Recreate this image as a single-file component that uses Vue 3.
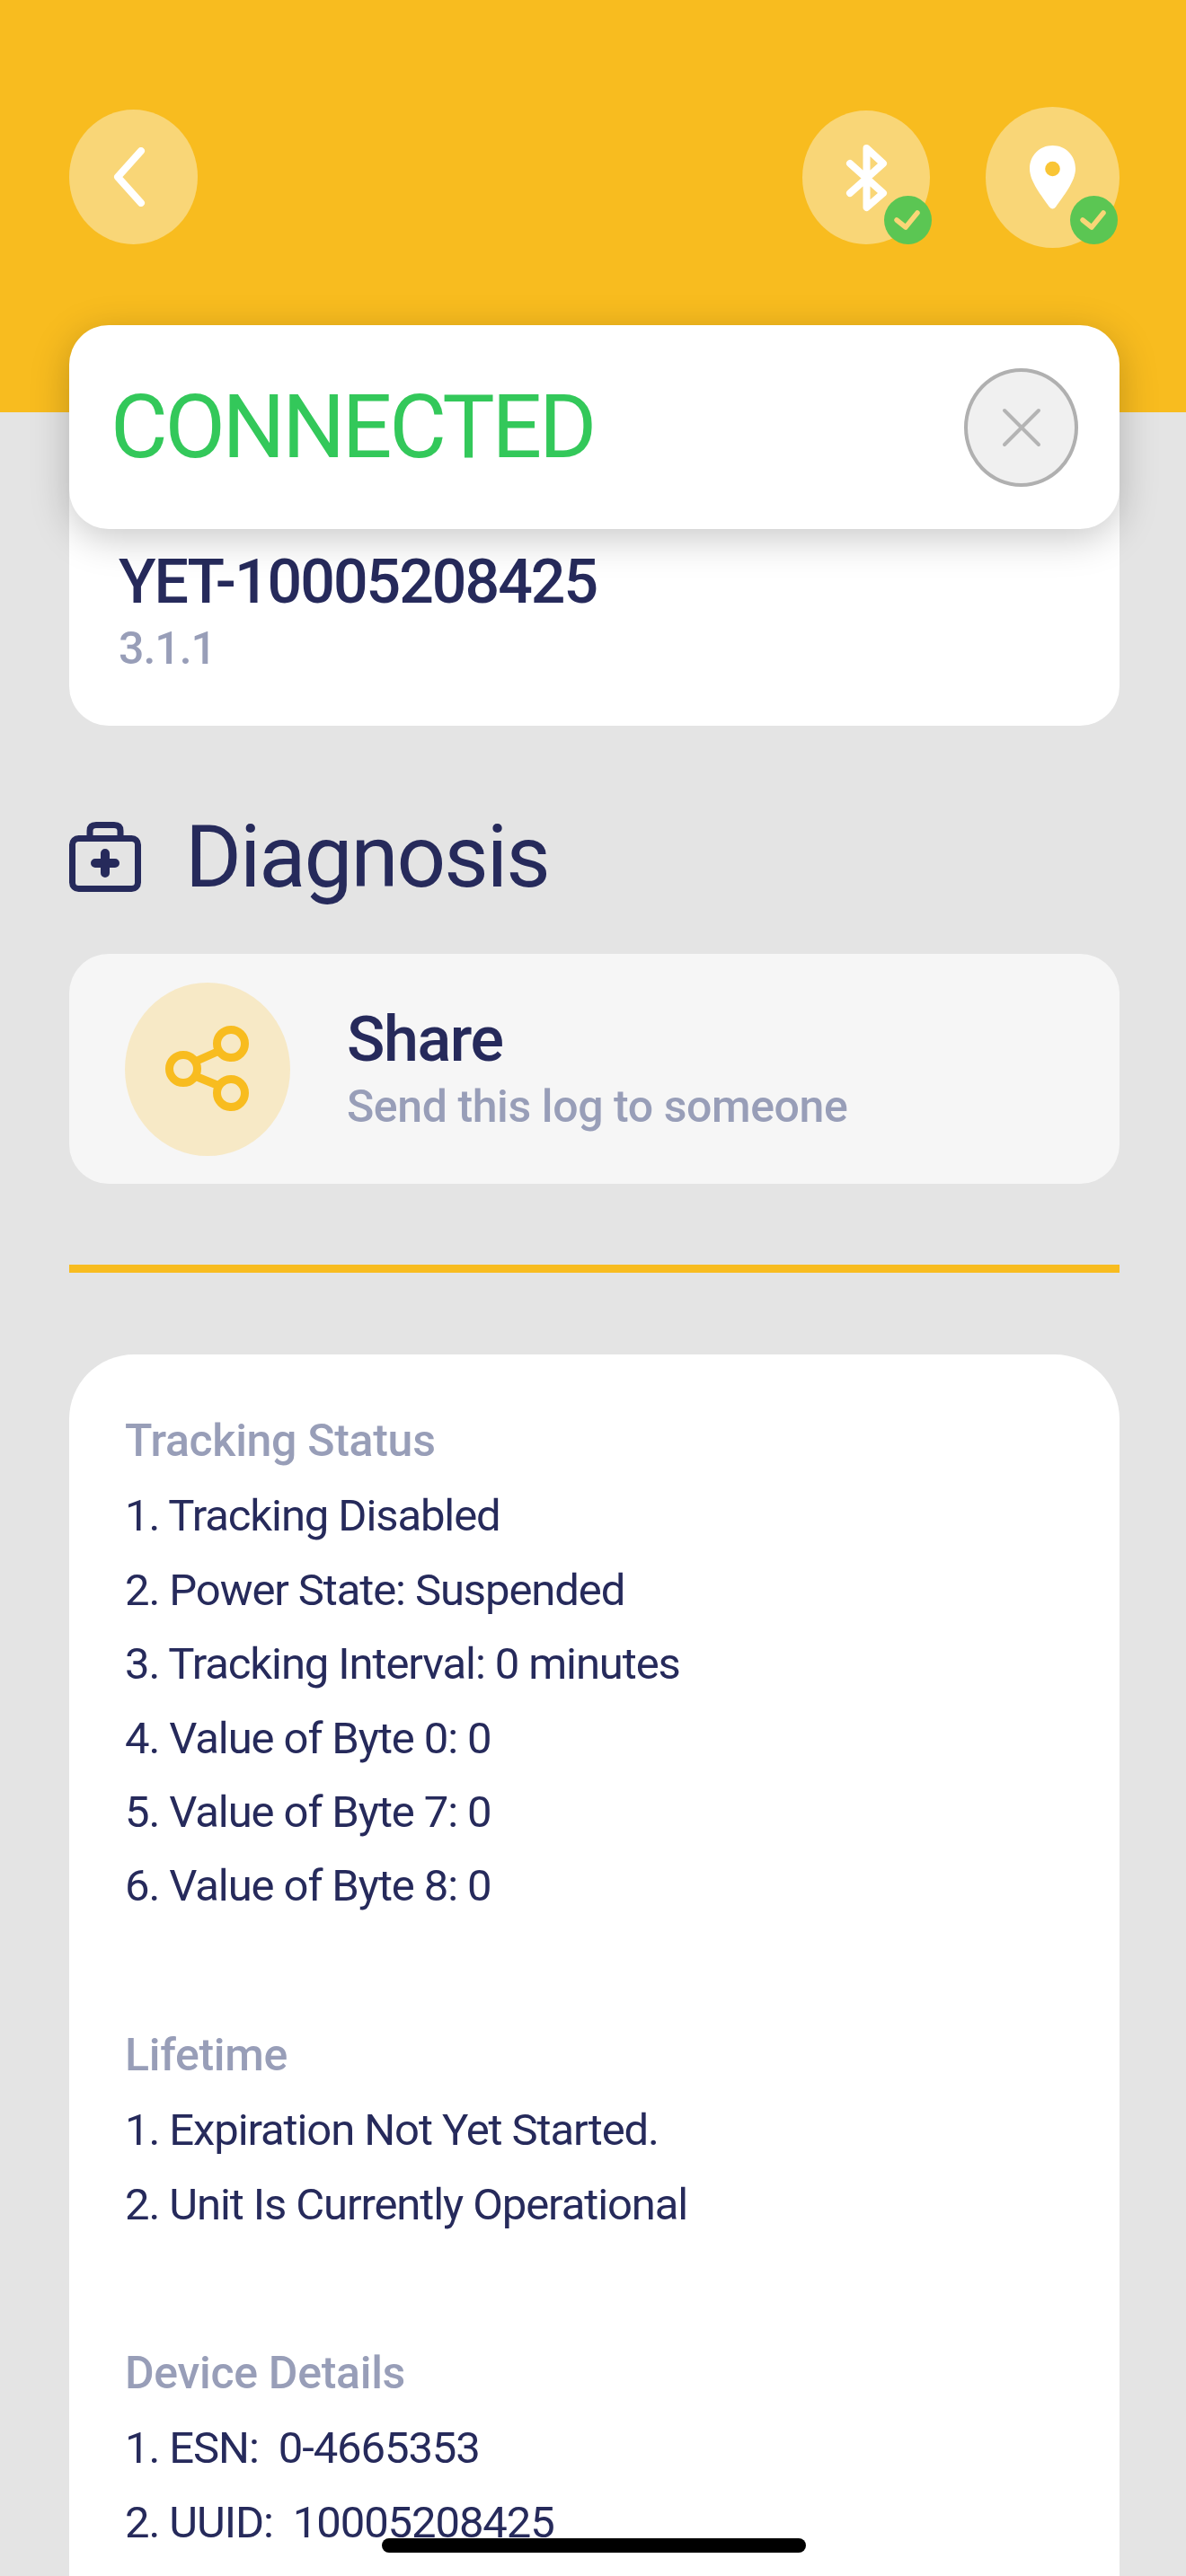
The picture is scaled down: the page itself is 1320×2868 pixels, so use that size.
<template>
  <div class="page">
    <header class="top">
      <button class="round back">
        <svg width="36" height="66" viewBox="0 0 36 66">
          <path d="M31 4 L5 33 L31 62" fill="none" stroke="#fff" stroke-width="8" stroke-linecap="round" stroke-linejoin="round" />
        </svg>
      </button>
      <div class="top-right">
        <div class="round ble">
          <svg width="47" height="76" viewBox="0 0 47 76">
            <path d="M5 22 L42 55 L23.5 71 V5 L42 22 L5 55" fill="none" stroke="#fff" stroke-width="8" stroke-linecap="round" stroke-linejoin="round" />
          </svg>
          <span class="badge">
            <svg width="53" height="54" viewBox="0 0 53 54">
              <path d="M14 27 L24 35 L37 19" fill="none" stroke="#f9d677" stroke-width="5.5" stroke-linecap="round" stroke-linejoin="round" />
            </svg>
          </span>
        </div>
        <div class="round pin">
          <svg width="51" height="71" viewBox="0 0 51 71">
            <path d="M25.5 0 C11 0 0 11 0 26 C0 40 14 57 22 68.5 Q25.5 72.5 29 68.5 C37 57 51 40 51 26 C51 11 40 0 25.5 0Z" fill="#fff" />
            <circle cx="25.5" cy="26" r="8.3" fill="#f9c535" />
          </svg>
          <span class="badge">
            <svg width="53" height="54" viewBox="0 0 53 54">
              <path d="M14 27 L24 35 L37 19" fill="none" stroke="#f9d677" stroke-width="5.5" stroke-linecap="round" stroke-linejoin="round" />
            </svg>
          </span>
        </div>
      </div>
    </header>

    <main class="content">
      <section class="device">
        <div class="device-name">YET-10005208425</div>
        <div class="device-ver">3.1.1</div>
      </section>

      <h1 class="heading">
        <svg width="80" height="78" viewBox="0 0 80 78">
          <rect x="3.5" y="18.5" width="73" height="56" rx="7" fill="none" stroke="#262a5b" stroke-width="7" />
          <path d="M23 16 V10 Q23 3.5 30 3.5 H50 Q57 3.5 57 10 V16" fill="none" stroke="#262a5b" stroke-width="7" />
          <path d="M40 35 V57 M29 46 H51" fill="none" stroke="#262a5b" stroke-width="10" stroke-linecap="round" />
        </svg>
        <span>Diagnosis</span>
      </h1>

      <div class="share">
        <div class="share-icon">
          <svg width="94" height="96" viewBox="0 0 94 96">
            <g fill="none" stroke="#f8bc1f" stroke-width="9">
              <circle cx="20" cy="48" r="15.5" />
              <circle cx="73" cy="20" r="15.5" />
              <circle cx="73" cy="75" r="15.5" />
              <path d="M33 40 L60 28 M33 56 L60 67" />
            </g>
          </svg>
        </div>
        <div>
          <div class="share-title">Share</div>
          <div class="share-sub">Send this log to someone</div>
        </div>
      </div>

      <div class="rule"></div>

      <section class="log">
        <div v-for="group in groups" :key="group.title" class="log-group">
          <div class="log-title">{{ group.title }}</div>
          <div v-for="(line, i) in group.lines" :key="line" class="log-line">{{ i + 1 }}. {{ line }}</div>
        </div>
      </section>
    </main>

    <div class="toast">
      <span class="toast-text">CONNECTED</span>
      <button class="close">
        <svg width="44" height="44" viewBox="0 0 44 44">
          <path d="M3 3 L41 41 M41 3 L3 41" fill="none" stroke="#b4b4b4" stroke-width="4" stroke-linecap="round" />
        </svg>
      </button>
    </div>

    <div class="home-bar"></div>
  </div>
</template>

<script setup>
const groups = [
  {
    title: 'Tracking Status',
    lines: [
      'Tracking Disabled',
      'Power State: Suspended',
      'Tracking Interval: 0 minutes',
      'Value of Byte 0: 0',
      'Value of Byte 7: 0',
      'Value of Byte 8: 0',
    ],
  },
  {
    title: 'Lifetime',
    lines: ['Expiration Not Yet Started.', 'Unit Is Currently Operational'],
  },
  {
    title: 'Device Details',
    lines: ['ESN:\u00a0 0-4665353', 'UUID:\u00a0 10005208425'],
  },
]
</script>

<style>
body {
  background: #e4e4e4;
}
</style>

<style scoped>
.page {
  position: relative;
  width: 1320px;
  height: 2868px;
  overflow: hidden;
  background: #e4e4e4;
  font-family: Roboto, "Liberation Sans", sans-serif;
  color: #262a5b;
}

.top {
  display: flex;
  justify-content: space-between;
  align-items: flex-start;
  height: 459px;
  box-sizing: border-box;
  padding: 119px 74px 0 77px;
  background: #f8bc1f;
}

.top-right {
  display: flex;
  align-items: center;
  gap: 62px;
  height: 157px;
}

.round {
  position: relative;
  display: flex;
  align-items: center;
  justify-content: center;
  padding: 0;
  border: none;
  border-radius: 50%;
  background: #f9d677;
}

.back {
  width: 143px;
  height: 150px;
  margin-top: 3px;
  padding-right: 9px;
}

.ble {
  width: 142px;
  height: 149px;
}

.pin {
  width: 149px;
  height: 157px;
}

.badge {
  position: absolute;
  right: -2px;
  bottom: 0;
  width: 53px;
  height: 54px;
  border-radius: 50%;
  background: #5bc653;
}

.badge svg {
  display: block;
}

.pin .badge {
  right: 2px;
  bottom: 4px;
}

.content {
  padding: 0 74px 0 77px;
}

.device {
  height: 408px;
  box-sizing: border-box;
  margin-top: -59px;
  padding: 208px 0 0 55px;
  border-radius: 44px;
  background: #fff;
}

.device-name {
  font-size: 68px;
  font-weight: 500;
  line-height: 80px;
  letter-spacing: -2px;
}

.device-ver {
  margin-top: 2px;
  font-size: 50px;
  font-weight: 500;
  line-height: 64px;
  letter-spacing: -1px;
  color: #989eb8;
}

.heading {
  display: flex;
  align-items: center;
  gap: 49px;
  height: 112px;
  margin: 90px 0 0;
  font-size: 96px;
  font-weight: 400;
  letter-spacing: -2px;
}

.share {
  display: flex;
  align-items: center;
  gap: 63px;
  height: 256px;
  margin-top: 52px;
  padding-left: 62px;
  border-radius: 44px;
  background: #f6f6f6;
}

.share-icon {
  display: flex;
  align-items: center;
  justify-content: center;
  width: 184px;
  height: 193px;
  border-radius: 50%;
  background: #f7e9c6;
}

.share-title {
  font-size: 70px;
  font-weight: 500;
  line-height: 80px;
  letter-spacing: -1.4px;
}

.share-sub {
  margin-top: 3px;
  font-size: 50px;
  font-weight: 500;
  line-height: 64px;
  letter-spacing: -.4px;
  color: #989eb8;
}

.rule {
  height: 9px;
  margin-top: 90px;
  background: #f8bc1f;
}

.log {
  height: 1400px;
  margin-top: 91px;
  padding: 57px 0 0 62px;
  border-radius: 72px 72px 0 0;
  background: #fff;
}

.log-group + .log-group {
  margin-top: 107px;
}

.log-title {
  margin: -2px 0 2px;
  font-size: 50px;
  font-weight: 500;
  line-height: 82.4px;
  letter-spacing: -.3px;
  color: #989eb8;
}

.log-line {
  font-size: 49px;
  line-height: 82.4px;
  letter-spacing: -1.1px;
}

.toast {
  position: absolute;
  top: 362px;
  left: 77px;
  display: flex;
  align-items: center;
  justify-content: space-between;
  width: 1169px;
  height: 227px;
  box-sizing: border-box;
  padding: 0 46px 0 46px;
  border-radius: 44px;
  background: #fff;
  box-shadow: 0 10px 44px rgba(0, 0, 0, .22);
}

.toast-text {
  font-size: 98px;
  letter-spacing: -3.3px;
  color: #33c85a;
}

.close {
  display: flex;
  align-items: center;
  justify-content: center;
  width: 127px;
  height: 132px;
  box-sizing: border-box;
  padding: 0;
  border: 4px solid #b0b0b0;
  border-radius: 50%;
  background: #f0f0f0;
}

.home-bar {
  position: absolute;
  left: 425px;
  top: 2826px;
  width: 472px;
  height: 16px;
  border-radius: 8px;
  background: #000;
}
</style>
